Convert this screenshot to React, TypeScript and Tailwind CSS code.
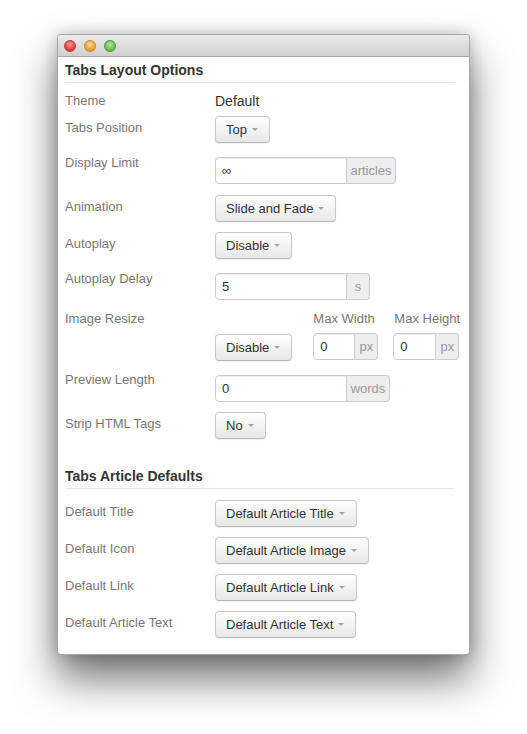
import React from "react";

const Caret = () => (
  <span className="ml-[5px] inline-block h-0 w-0 border-x-[3px] border-t-[3px] border-x-transparent border-t-[#a3a3a3]" />
);

const Dropdown = ({ text, className = "" }: { text: string; className?: string }) => (
  <div
    className={`inline-flex h-[27px] shrink-0 items-center whitespace-nowrap rounded-[4px] border border-[#c8c8c8] border-b-[#b8b8b8] bg-[linear-gradient(#ffffff,#e8e8e8)] pl-[10px] pr-[11px] text-[13px] text-[#333] shadow-[inset_0_1px_0_rgba(255,255,255,0.9),0_1px_2px_rgba(0,0,0,0.06)] ${className}`}
  >
    <span>{text}</span>
    <Caret />
  </div>
);

const InputGroup = ({
  value,
  addon,
  inputW,
  addonW,
  className = "",
}: {
  value: string;
  addon: string;
  inputW: string;
  addonW: string;
  className?: string;
}) => (
  <div className={`flex h-[27px] shrink-0 ${className}`}>
    <div
      className={`flex shrink-0 items-center rounded-l-[4px] border border-[#cccccc] bg-white pl-[6px] text-[13px] text-[#333] shadow-[inset_0_1px_1px_rgba(0,0,0,0.07)] ${inputW}`}
    >
      {value}
    </div>
    <div
      className={`flex shrink-0 items-center justify-center rounded-r-[4px] border border-l-0 border-[#cccccc] bg-[#eeeeee] text-[13px] text-[#999] ${addonW}`}
    >
      {addon}
    </div>
  </div>
);

const Label = ({ children, lh }: { children: React.ReactNode; lh: string }) => (
  <div className={`w-[150px] shrink-0 whitespace-nowrap text-[13px] text-[#777] ${lh}`}>{children}</div>
);

export default function App() {
  return (
    <div className="min-h-[734px] bg-white pl-[57px] pt-[34px] font-['Liberation_Sans',Arial,sans-serif]">
      <div className="h-[621px] w-[413px] overflow-hidden rounded-[4px] border border-[rgba(0,0,0,0.35)] bg-white shadow-[0_24px_42px_rgba(0,0,0,0.55),0_0_16px_rgba(0,0,0,0.22)]">
        {/* title bar */}
        <div className="flex h-[22px] items-center gap-[8px] border-b border-[#a9a9a9] bg-[linear-gradient(#ebebeb,#d0d0d0)] pl-[6px]">
          <span className="h-[12px] w-[12px] rounded-full border border-[#b83a36] bg-[radial-gradient(circle_at_50%_35%,#ff9a92,#e0443e_60%,#c23530)]" />
          <span className="h-[12px] w-[12px] rounded-full border border-[#c08a2c] bg-[radial-gradient(circle_at_50%_35%,#ffd98a,#e9a63a_60%,#cf8a26)]" />
          <span className="h-[12px] w-[12px] rounded-full border border-[#4d9a3c] bg-[radial-gradient(circle_at_50%_35%,#b6ec9c,#6cc04f_60%,#4ea23a)]" />
        </div>

        {/* content */}
        <div className="pl-[7px] pr-[14px]">
          <div className="mt-[2px] h-[24px] border-b border-[#e5e5e5] text-[14px] font-bold leading-[23px] text-[#333]">
            Tabs Layout Options
          </div>

          <div className="mt-[7px] flex h-[22px] items-center">
            <Label lh="leading-[22px]">Theme</Label>
            <div className="text-[14px] leading-[22px] text-[#333]">Default</div>
          </div>

          <div className="mt-[4px] flex items-start">
            <Label lh="leading-[24px]">Tabs Position</Label>
            <Dropdown text="Top" />
          </div>

          <div className="mt-[11px] flex items-start">
            <Label lh="leading-[18px]">Display Limit</Label>
            <InputGroup className="mt-[3px]" value="∞" addon="articles" inputW="w-[132px]" addonW="w-[49px]" />
          </div>

          <div className="mt-[11px] flex items-start">
            <Label lh="leading-[24px]">Animation</Label>
            <Dropdown text="Slide and Fade" />
          </div>

          <div className="mt-[10px] flex items-start">
            <Label lh="leading-[24px]">Autoplay</Label>
            <Dropdown text="Disable" />
          </div>

          <div className="mt-[11px] flex items-start">
            <Label lh="leading-[18px]">Autoplay Delay</Label>
            <InputGroup className="mt-[3px]" value="5" addon="s" inputW="w-[132px]" addonW="w-[23px]" />
          </div>

          <div className="mt-[10px] flex items-start">
            <Label lh="leading-[18px]">Image Resize</Label>
            <div className="flex shrink-0 items-start">
              <Dropdown text="Disable" className="mt-[24px]" />
              <div className="ml-[21px] flex shrink-0 flex-col">
                <div className="whitespace-nowrap text-[13px] leading-[18px] text-[#777]">Max Width</div>
                <InputGroup className="mt-[5px]" value="0" addon="px" inputW="w-[42px]" addonW="w-[23px]" />
              </div>
              <div className="ml-[15px] flex shrink-0 flex-col">
                <div className="whitespace-nowrap pl-[1px] text-[13px] leading-[18px] text-[#777]">Max Height</div>
                <InputGroup className="mt-[5px]" value="0" addon="px" inputW="w-[43px]" addonW="w-[23px]" />
              </div>
            </div>
          </div>

          <div className="mt-[10px] flex items-start">
            <Label lh="leading-[18px]">Preview Length</Label>
            <InputGroup className="mt-[4px]" value="0" addon="words" inputW="w-[132px]" addonW="w-[43px]" />
          </div>

          <div className="mt-[10px] flex items-start">
            <Label lh="leading-[24px]">Strip HTML Tags</Label>
            <Dropdown text="No" />
          </div>

          <div className="mt-[26px] h-[24px] border-b border-[#e5e5e5] text-[14px] font-bold leading-[23px] text-[#333]">
            Tabs Article Defaults
          </div>

          <div className="mt-[11px] flex items-start">
            <Label lh="leading-[24px]">Default Title</Label>
            <Dropdown text="Default Article Title" />
          </div>

          <div className="mt-[10px] flex items-start">
            <Label lh="leading-[24px]">Default Icon</Label>
            <Dropdown text="Default Article Image" />
          </div>

          <div className="mt-[10px] flex items-start">
            <Label lh="leading-[24px]">Default Link</Label>
            <Dropdown text="Default Article Link" />
          </div>

          <div className="mt-[10px] flex items-start">
            <Label lh="leading-[24px]">Default Article Text</Label>
            <Dropdown text="Default Article Text" />
          </div>
        </div>
      </div>
    </div>
  );
}
